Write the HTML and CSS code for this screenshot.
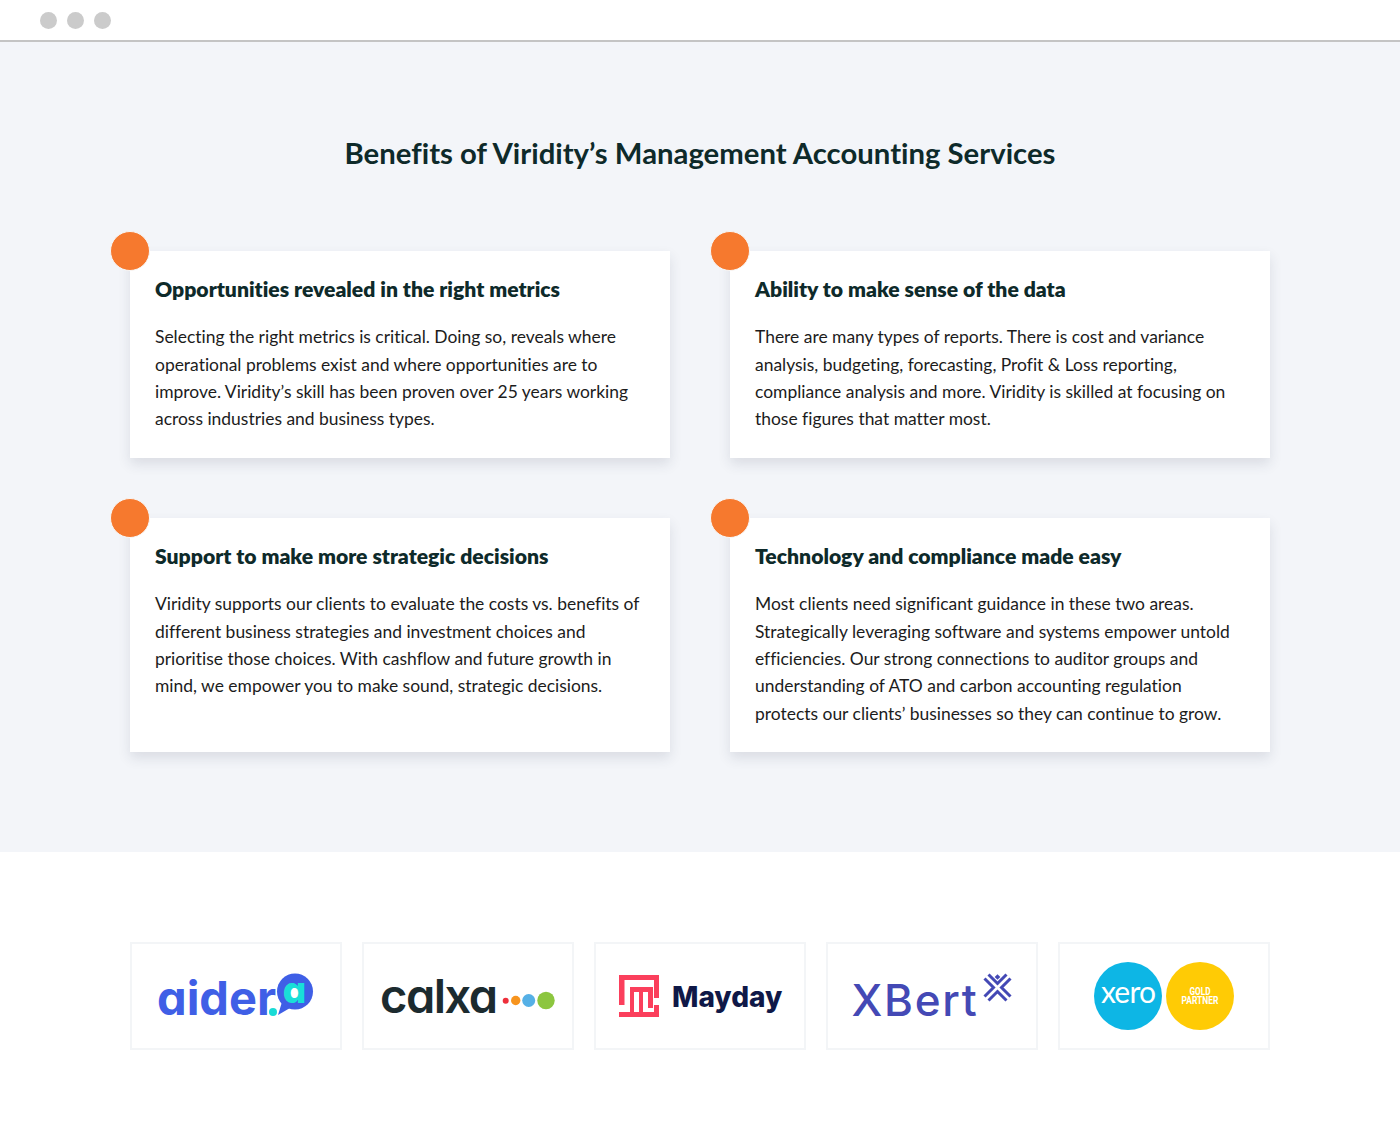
FILE: index.html
```html
<!DOCTYPE html>
<html lang="en">
<head>
  <meta charset="UTF-8">
  <meta name="viewport" content="width=device-width, initial-scale=1.0">
  <title>Benefits of Viridity's Management Accounting Services</title>
  <link rel="stylesheet" href="styles.css">
</head>
<body>
  <div class="window-bar">
    <span class="window-dot"></span>
    <span class="window-dot"></span>
    <span class="window-dot"></span>
  </div>

  <section class="benefits">
    <h2>Benefits of Viridity’s Management Accounting Services</h2>
    <div class="card-grid">
      <div class="card">
        <span class="card-dot"></span>
        <h3>Opportunities revealed in the right metrics</h3>
        <p>Selecting the right metrics is critical. Doing so, reveals where operational problems exist and where opportunities are to improve. Viridity’s skill has been proven over 25 years working across industries and business types.</p>
      </div>
      <div class="card">
        <span class="card-dot"></span>
        <h3>Ability to make sense of the data</h3>
        <p>There are many types of reports. There is cost and variance analysis, budgeting, forecasting, Profit &amp; Loss reporting, compliance analysis and more. Viridity is skilled at focusing on those figures that matter most.</p>
      </div>
      <div class="card">
        <span class="card-dot"></span>
        <h3>Support to make more strategic decisions</h3>
        <p>Viridity supports our clients to evaluate the costs vs. benefits of different business strategies and investment choices and prioritise those choices. With cashflow and future growth in mind, we empower you to make sound, strategic decisions.</p>
      </div>
      <div class="card">
        <span class="card-dot"></span>
        <h3>Technology and compliance made easy</h3>
        <p>Most clients need significant guidance in these two areas. Strategically leveraging software and systems empower untold efficiencies. Our strong connections to auditor groups and understanding of ATO and carbon accounting regulation protects our clients’ businesses so they can continue to grow.</p>
      </div>
    </div>
  </section>

  <section class="partners">
    <div class="logo-box">
      <svg class="logo" viewBox="0 0 212 108">
        <text class="logo-aider" x="27" y="73">aider</text>
        <path d="M152 60 L148 73 L160 66 Z" fill="#3f5fe6"/>
        <circle cx="165" cy="49.500" r="18" fill="#3f5fe6"/>
        <circle cx="163.500" cy="50" r="7" fill="#fff"/>
        <text class="logo-aider-a" x="164.500" y="61">a</text>
        <circle cx="143" cy="70" r="4" fill="#19dbd6"/>
      </svg>
    </div>
    <div class="logo-box">
      <svg class="logo" viewBox="0 0 212 108">
        <text class="logo-calxa" x="18" y="71">calxa</text>
        <circle cx="143.700" cy="58.700" r="3" fill="#ee2f3b"/>
        <circle cx="153.700" cy="58.500" r="4.700" fill="#f7941e"/>
        <circle cx="166.700" cy="58.500" r="6.500" fill="#55b0e6"/>
        <circle cx="184" cy="58.500" r="8.700" fill="#8cc63f"/>
      </svg>
    </div>
    <div class="logo-box">
      <svg class="logo" viewBox="0 0 212 108">
        <path d="M25 33 H65 V56 H60 V38 H30.500 V63 H25 Z M36 45 H59 V66 H54 V50 H49 V70 H60 V63 H65 V75 H25 V70 H36 Z M40 50 V70 H45 V50 Z" fill="#fb3f5c" fill-rule="evenodd"/>
        <text class="logo-mayday" x="78" y="64.500">Mayday</text>
      </svg>
    </div>
    <div class="logo-box">
      <svg class="logo" viewBox="0 0 212 108">
        <text class="logo-xbert" x="25.500" y="74">XBert</text>
        <path d="M158.500 36.500 L167.500 45.500 L158.500 54.500 M184.500 36.500 L175.500 45.500 L184.500 54.500 M162.500 32.500 L171.500 41.500 L180.500 32.500 M162.500 58.500 L171.500 49.500 L180.500 58.500" fill="none" stroke="#4449b5" stroke-width="3"/>
        <rect x="169.500" y="33" width="4" height="4" fill="#4449b5" transform="rotate(45 171.500 35)"/>
      </svg>
    </div>
    <div class="logo-box">
      <svg class="logo" viewBox="0 0 212 108">
        <circle cx="70" cy="54" r="34" fill="#0db6e5"/>
        <circle cx="142" cy="54" r="34" fill="#ffcb05"/>
        <text class="logo-xero" x="70" y="61">xero</text>
        <text class="logo-gold" x="142" y="53" textLength="21" lengthAdjust="spacingAndGlyphs">GOLD</text>
        <text class="logo-gold" x="142" y="62" textLength="37" lengthAdjust="spacingAndGlyphs">PARTNER</text>
      </svg>
    </div>
  </section>
</body>
</html>
```

FILE: styles.css
```css
* {
  box-sizing: border-box;
}

body {
  margin: 0;
  background-color: #fff;
  font-family: "Lato", "Noto Sans", sans-serif;
  font-variant-ligatures: none;
  color: #16282a;
}

.window-bar {
  display: flex;
  align-items: center;
  gap: 10px;
  height: 42px;
  padding-left: 40px;
  border-bottom: 2px solid #c4c4c4;
}

.window-dot {
  width: 17px;
  height: 17px;
  border-radius: 50%;
  background-color: #cbcbcb;
}

.benefits {
  height: 810px;
  padding: 92px 130px 0;
  background-color: #f3f5f9;
}

h2 {
  margin: 0 0 80px;
  text-align: center;
  font-size: 29.300px;
  line-height: 37px;
  font-weight: 700;
  color: #0e2a2a;
}

.card-grid {
  display: grid;
  grid-template-columns: 540px 540px;
  gap: 60px;
}

.card {
  position: relative;
  padding: 24px 25px 25.200px;
  background-color: #fff;
  box-shadow: 0 6px 12px rgba(40, 50, 70, 0.12);
}

.card-dot {
  position: absolute;
  top: -20px;
  left: -20px;
  width: 40px;
  height: 40px;
  border-radius: 50%;
  border: 1px solid #f8f8f8;
  background-color: #f6792e;
}

h3 {
  margin: 0 0 20.300px;
  font-size: 21.150px;
  line-height: 28px;
  font-weight: 800;
  color: #0e2a2a;
}

.card p {
  margin: 0;
  font-size: 17.450px;
  line-height: 27.350px;
  color: #1c1c1c;
}

.partners {
  display: flex;
  gap: 20px;
  padding: 90px 130px 0;
}

.logo-box {
  width: 212px;
  height: 108px;
  border: 2px solid #f3f5f7;
}

.logo {
  display: block;
  width: 212px;
  height: 108px;
  margin: -2px;
}

.logo-aider {
  font-family: "Inter", sans-serif;
  font-feature-settings: "cv11";
  font-size: 47px;
  font-weight: 700;
  fill: #3f5fe6;
}

.logo-aider-a {
  font-family: "Inter", sans-serif;
  font-feature-settings: "cv11";
  font-size: 37px;
  font-weight: 800;
  text-anchor: middle;
  fill: #19dfd8;
}

.logo-calxa {
  font-family: "Inter", sans-serif;
  font-feature-settings: "cv11";
  font-size: 47px;
  font-weight: 600;
  letter-spacing: -1.500px;
  fill: #1c2b2f;
}

.logo-mayday {
  font-family: "Inter", sans-serif;
  font-size: 28px;
  font-weight: 800;
  fill: #0f1847;
}

.logo-xbert {
  font-family: "Inter", sans-serif;
  font-size: 44px;
  font-weight: 500;
  letter-spacing: 1.700px;
  fill: #4449b5;
}

.logo-xero {
  font-family: "Lato", sans-serif;
  font-size: 30px;
  font-weight: 400;
  letter-spacing: -0.800px;
  text-anchor: middle;
  fill: #fff;
}

.logo-gold {
  font-family: "Roboto", sans-serif;
  font-size: 10px;
  font-weight: 700;
  text-anchor: middle;
  fill: #fff;
}
```
